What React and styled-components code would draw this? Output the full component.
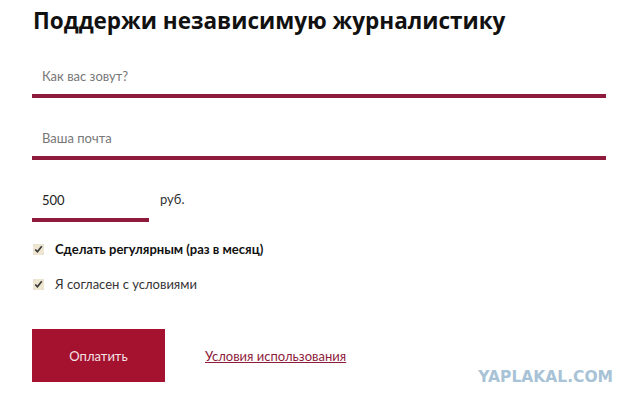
import React from "react";
import styled, { createGlobalStyle } from "styled-components";

const GlobalStyle = createGlobalStyle`
  body {
    margin: 0;
    background: #fff;
    font-family: "Lato", "Open Sans", sans-serif;
  }
`;

const DonateForm = () => {
  return (
    <Page>
      <GlobalStyle />
      <Title>Поддержи независимую журналистику</Title>
      <Field>
        <Input placeholder="Как вас зовут?" />
      </Field>
      <Field>
        <Input placeholder="Ваша почта" />
      </Field>
      <AmountRow>
        <Field width="117px">
          <Input defaultValue="500" dark />
        </Field>
        <Currency>руб.</Currency>
      </AmountRow>
      <Checks>
        <Check>
          <Box type="checkbox" defaultChecked />
          <CheckText bold>Сделать регулярным (раз в месяц)</CheckText>
        </Check>
        <Check>
          <Box type="checkbox" defaultChecked />
          <CheckText>Я согласен с условиями</CheckText>
        </Check>
      </Checks>
      <Actions>
        <PayButton>Оплатить</PayButton>
        <TermsLink href="#">Условия использования</TermsLink>
      </Actions>
      <Watermark>YAPLAKAL.COM</Watermark>
    </Page>
  );
};
export default DonateForm;

const Page = styled.div`
  position: relative;
  width: 640px;
  height: 408px;
  box-sizing: border-box;
  padding: 6px 34px 0 32px;
  overflow: hidden;
`;

const Title = styled.h1`
  margin: 0 0 0 1px;
  font-family: "Open Sans", sans-serif;
  font-size: 22.5px;
  font-weight: 700;
  color: #111;
  line-height: 30px;
`;

const Field = styled.div`
  width: ${(p) => p.width || "574px"};
  border-bottom: 4px solid #8e1b3b;
`;

const Input = styled.input`
  display: block;
  width: 100%;
  box-sizing: border-box;
  border: 0;
  outline: none;
  background: transparent;
  padding: 21px 10px 0;
  height: 58px;
  font-family: "Lato", sans-serif;
  font-size: 13px;
  color: ${(p) => (p.dark ? "#222" : "#777")};
  &::placeholder {
    color: #777;
  }
`;

const AmountRow = styled.div`
  display: flex;
  align-items: flex-end;
  gap: 11px;
`;

const Currency = styled.span`
  font-size: 13px;
  color: #333;
  line-height: 37px;
  padding-bottom: 4px;
`;

const Checks = styled.div`
  display: flex;
  flex-direction: column;
  gap: 15px;
  margin-top: 17px;
`;

const Check = styled.label`
  display: flex;
  align-items: center;
  gap: 11px;
  height: 20px;
`;

const Box = styled.input`
  margin: 0 0 0 1px;
  width: 11px;
  height: 11px;
  accent-color: #efe6d2;
`;

const CheckText = styled.span`
  font-size: 13px;
  font-weight: ${(p) => (p.bold ? 700 : 400)};
  color: ${(p) => (p.bold ? "#111" : "#333")};
`;

const Actions = styled.div`
  display: flex;
  align-items: center;
  gap: 40px;
  margin-top: 35px;
`;

const PayButton = styled.button`
  width: 133px;
  height: 53px;
  border: 0;
  background: #a5122f;
  color: #f3e3e6;
  font-family: "Lato", sans-serif;
  font-size: 13px;
  cursor: pointer;
`;

const TermsLink = styled.a`
  font-size: 13px;
  color: #8e1b3b;
  text-decoration: underline;
`;

const Watermark = styled.div`
  position: absolute;
  right: 27px;
  bottom: 22px;
  font-family: "DejaVu Sans", sans-serif;
  font-weight: 700;
  font-size: 15.5px;
  color: #a8c2d6;
`;
